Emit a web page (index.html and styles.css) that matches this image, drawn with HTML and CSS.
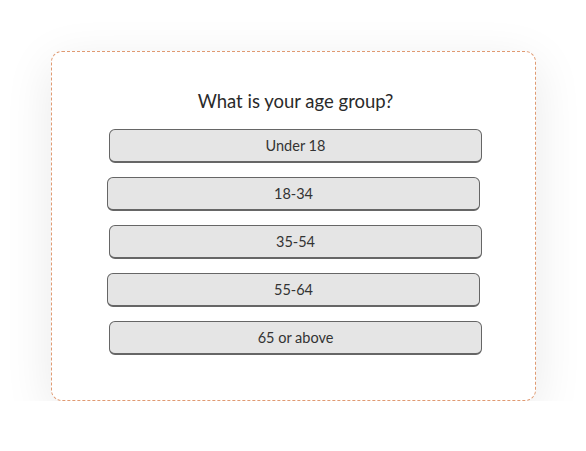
FILE: index.html
```html
<!DOCTYPE html>
<html>
<head>
<meta charset="utf-8">
<link rel="stylesheet" href="styles.css">
</head>
<body>
<div class="card">
  <h1 class="title">What is your age group?</h1>
  <div class="options">
    <button class="option">Under 18</button>
    <button class="option shift">18-34</button>
    <button class="option">35-54</button>
    <button class="option shift">55-64</button>
    <button class="option">65 or above</button>
  </div>
</div>
</body>
</html>
```
FILE: styles.css
```css
html, body {
  margin: 0;
  padding: 0;
  background: #ffffff;
}
body {
  font-family: "Lato", "Liberation Sans", sans-serif;
  color: #333;
  padding: 51px 0 0 51px;
}
.card {
  box-sizing: border-box;
  width: 485px;
  height: 350px;
  border: 1px dashed #e09a72;
  border-radius: 11px;
  background: #fff;
  box-shadow: 0 12px 50px rgba(0, 0, 0, 0.09);
  padding-top: 35px;
  display: flex;
  flex-direction: column;
  align-items: center;
}
.title {
  margin: 0 0 14px 0;
  font-size: 18.5px;
  line-height: 28px;
  font-weight: 400;
  color: #2a2a2a;
  padding-left: 4px;
}
.options {
  display: flex;
  flex-direction: column;
  gap: 14px;
  padding-left: 4px;
}
.option {
  box-sizing: border-box;
  width: 373px;
  height: 34px;
  border: 1px solid #666;
  border-bottom-width: 2px;
  border-radius: 6px;
  background: #e5e5e5;
  font-family: "Lato", "Liberation Sans", sans-serif;
  font-size: 14.5px;
  color: #333;
  padding: 0;
}
.shift {
  margin-left: -2px;
}
```
